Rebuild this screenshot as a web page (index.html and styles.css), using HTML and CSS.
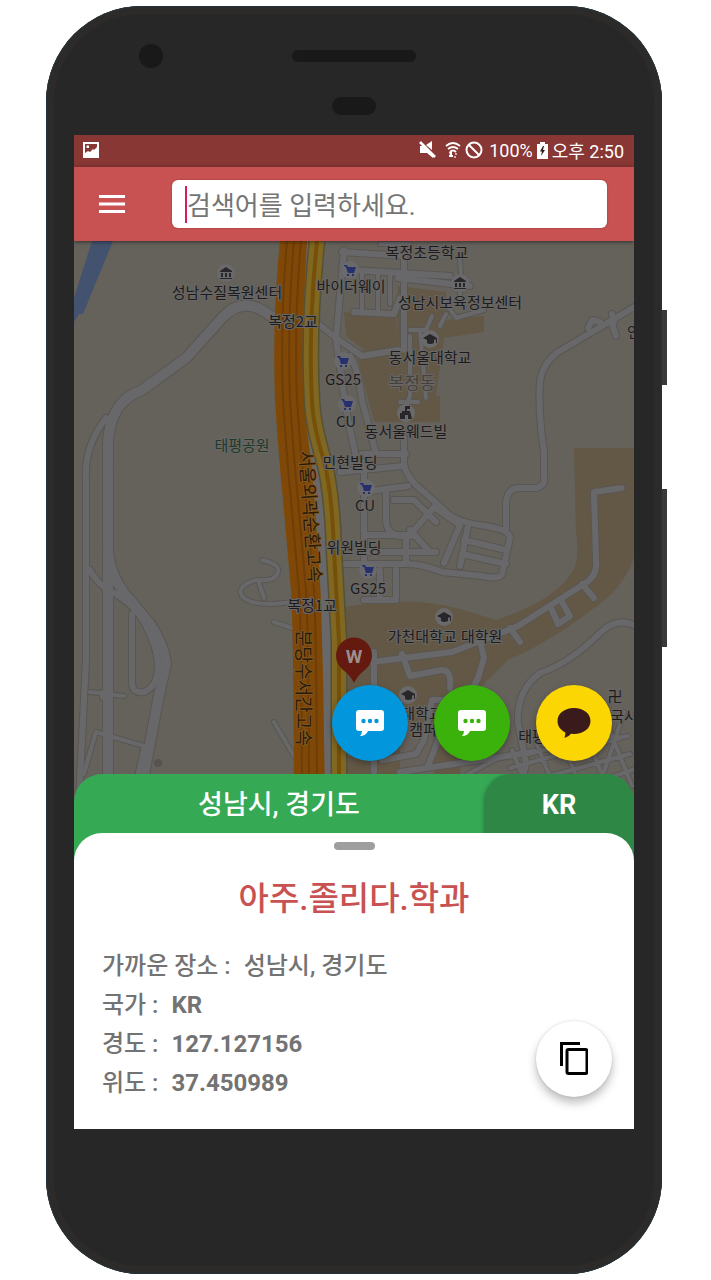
FILE: index.html
```html
<!DOCTYPE html>
<html lang="ko">
<head>
<meta charset="utf-8">
<meta name="viewport" content="width=device-width, initial-scale=1">
<title>성남시, 경기도</title>
<link rel="stylesheet" href="styles.css">
</head>
<body>
<div class="phone">
  <span class="side-key side-key-power"></span>
  <span class="side-key side-key-volume"></span>
  <div class="bezel">
    <div class="bezel-row">
      <span class="camera"></span>
      <span class="speaker"></span>
    </div>
    <span class="sensor"></span>
  </div>

  <main class="screen">
    <div class="status-bar">
      <svg class="status-photo" width="16" height="16" viewBox="0 0 16 16"><path fill="#fff" fill-rule="evenodd" d="M0 0h16v16H0zM2 2v9l3-2 2 1 3-3 1 1 3-3V2zM3.500 3.500h2.500v2.500H3.500z"/></svg>
      <div class="status-info">
        <svg width="18" height="18" viewBox="0 0 18 18"><path fill="#fff" d="M1 5h3l10 9v3l-6-5H1zM7 4l6-4v9z"/><path stroke="#fff" stroke-width="2.600" d="M1 1l15 15"/></svg>
        <svg class="status-wifi" width="16" height="18" viewBox="0 0 16 18"><g fill="none" stroke="#fff" stroke-width="1.800"><path d="M1 5q7-6 14 0M3 8q5-4 10 0M5 11q3-3 6 0"/></g><path fill="#fff" d="M4 11h3v3h1v2H4v-2h1z"/><path fill="#d9a9a6" d="M10 12h2v2h-2zM9 15h2v2H9z"/></svg>
        <svg width="18" height="18" viewBox="0 0 18 18"><g fill="none" stroke="#fff" stroke-width="2"><circle cx="9" cy="9" r="7.500"/><path d="M4 4l10 10"/></g></svg>
        <span class="battery-text">100%</span>
        <svg width="11" height="17" viewBox="0 0 11 17"><path fill="#fff" d="M3 0h5v2h3v15H0V2h3z"/><path fill="#2a1c1c" d="M6 4L3 9.500h2L4 14l4-6H6l1-4z"/></svg>
        <span>오후 2:50</span>
      </div>
    </div>

    <header class="toolbar">
      <button class="menu-button" type="button" aria-label="메뉴">
        <svg width="26" height="20" viewBox="0 0 26 20"><path stroke="#fff" stroke-width="2.800" d="M0 2.500h26M0 10h26M0 17.500h26"/></svg>
      </button>
      <label class="search">
        <span class="caret"></span>
        <input class="search-input" type="text" aria-label="검색어" placeholder="검색어를 입력하세요.">
      </label>
    </header>

    <section class="map">
      <svg class="map-canvas" viewBox="74 241 560 616" role="img" aria-label="지도">
        <defs>
          <g id="road-wide">
            <path d="M108 860V440q2-20 10-32q8-12 24-18L186 358L222 318Q240 298 262 310L280 322"/>
            <path d="M108 470v80q2 28 22 50l20 24q14 20 16 40l-8 36-28 150"/>
          </g>
          <g id="road-mid">
            <path d="M106 418Q84 446 86 480V660L76 860M90 570q6 12 18 20q26 12 38 36q12 24 12 40q0 20-14 26q-12 2-12-10V614"/>
            <path d="M316 322l20 16 26 18 36-6"/>
            <path d="M344 250L336 340L346 410L358 466"/>
            <path d="M350 356q8 12 12 44l14 54"/>
            <path d="M342 252L404 256V350M352 270L450 276M398 278L470 286"/>
            <path d="M354 312l40 2 6-16"/>
            <path d="M404 438v26q2 14 20 28l22 20q10 10 40 14q24 4 24 12l-8 36q-2 6-20 2l-40-4q-20-8-34-8H340"/>
            <path d="M340 472l64-6M362 454h44M364 462v110M364 492l44-6M386 490l0 32q2 14 16 14h14"/>
            <path d="M364 535h46l24-28 26 18-16 38M364 552h72M410 530l20 22M394 500h20l22 22M406 538v26"/>
            <path d="M468 526l-8 40M464 540l42 10M462 554l44 10"/>
            <path d="M364 600h32v-30M380 570v30"/>
            <path d="M506 532v-30q2-14 12-14h18q10-2 8-12v-24q-6-40-4-70q2-18 18-30l78-46"/>
            <path d="M588 328l4-8 8 2M612 324l4 12M614 322l-2-8"/>
            <path d="M594 494v-2l28-4M594 494l2 66q2 16-12 24l-66 42-66 26-80 10"/>
            <path d="M582 584l12 14M552 610l6 14 12-8-8-14M510 628l10 14"/>
            <path d="M634 625q-18-8-34 8-30 30-60 40-24 18-22 50l8 40-18 90"/>
            <path d="M480 640l4 18-6 20-12 22h-34q-6 30-8 40l-8 14-34 6M402 654l8 22 32-6q10 0 8 18"/>
            <path d="M374 652v120M400 772l134-20M438 740l-10 26"/>
          </g>
          <g id="road-thin">
            <path d="M262 560q18 4 16 12-2 10-22 8-20 6-14 16 10 12 50 6M258 580l6 18M274 622l18 6M274 722l20 34"/>
            <path d="M90 692l34 4M102 692v6M84 774l12-42 48 14-16 70M96 732l-12 40"/>
            <path d="M362 270v40M378 272v38M390 272v32M380 244h30M460 260l2 26M460 286v16M410 330h16l6-14M444 300l12 18 28-8M440 326l6-12M410 336v60l-4 10M420 330l6 68M400 402h18"/>
            <path d="M468 774l30-16 130-22M512 750l24 60M536 742l24 60M560 736l24 60M584 730l24 60M608 726l24 60M510 768l110-30M520 784l110-30M548 798l90-30M624 712l-20 60"/>
          </g>
          <g id="poi-shop"><circle r="9" fill="#6a696b"/><path fill="#26306e" d="M-6-5h3l1 2h8l-2 6h-6l-2-6-2-1zM-3 4h2v2h-2zM2 4h2v2H2z"/></g>
          <g id="poi-museum"><circle r="9" fill="#6a696b"/><path fill="#29262a" d="M-6-2l6-4 6 4v1H-6zM-5 0h2v4h-2zM-1 0h2v4h-2zM3 0h2v4H3zM-6 5H6v1H-6z"/></g>
          <g id="poi-school"><circle r="9" fill="#6a696b"/><path fill="#29262a" d="M-7-1l7-4 7 4v5H6V0L4 1v3q-4 2-7 0V1z"/></g>
        </defs>

        <rect x="74" y="241" width="560" height="616" fill="#65615b"/>
        <path fill="#43536f" d="M92 241h21L83 314h-4l-5 8v-24z"/>
        <g fill="#635846">
          <path d="M344 312l40 4 12-4v34l-32 4-18-14zM398 286l48 6v28l38-4v16l-40 6-8 58h4v26h-66l-18-70 40-8z"/>
          <path d="M574 448h60v110q-12 32-40 50-44 34-86 52l-40 40-8 74H340V608q70-14 124 2l32 10q60-20 76-48q8-10 4-40z"/>
          <path fill="#66615a" d="M400 722h34v52h-34z"/>
        </g>
        <g class="road-casing"><use class="w-wide" href="#road-wide"/><use class="w-mid" href="#road-mid"/><use class="w-thin" href="#road-thin"/></g>
        <g class="road-fill"><use class="w-wide" href="#road-wide"/><use class="w-mid" href="#road-mid"/><use class="w-thin" href="#road-thin"/></g>

        <path fill="#68686a" d="M300 241h12l-6 120 14 120 16 120v256h-16l-8-256-10-160z"/>
        <path fill="#804806" d="M280 241q-8 80-5 159 4 60 8 100l8 90q3 50 3 267h31q0-130-4-257-3-60-10-140-8-50-8-140l4-79z"/>
        <g fill="none" stroke-linejoin="round">
          <path stroke="#6e3d08" stroke-width="2" d="M287 241q-7 80-4 159 4 60 8 100l8 90q3 50 3 267M294 241q-7 80-4 159 4 60 8 100l8 90q3 50 3 267M301 241q-7 80-4 159 4 60 9 100l8 90q3 50 3 267"/>
          <path stroke="#555038" stroke-width="17" d="M317 241q-9 90-5 160 1 24 12 60 8 30 10 90l5 90v216"/>
          <path stroke="#806722" stroke-width="14" d="M317 241q-9 90-5 160 1 24 12 60 8 30 10 90l5 90v216"/>
          <path stroke="#755009" stroke-width="4" d="M317 241q-9 90-5 160 1 24 12 60 8 30 10 90l5 90v216"/>
        </g>

        <use href="#poi-museum" x="226" y="273"/>
        <use href="#poi-shop" x="350" y="270"/>
        <use href="#poi-museum" x="460" y="283"/>
        <use href="#poi-school" x="430" y="339"/>
        <use href="#poi-shop" x="343" y="361"/>
        <use href="#poi-shop" x="347" y="404"/>
        <circle cx="406" cy="413" r="9" fill="#6a696b"/>
        <path fill="#29262a" d="M405 406h5v3h-3v2h3l2 8h-12v-6h2v-2h3z"/>
        <path fill="#6a696b" d="M405 415h3v4h-3z"/>
        <use href="#poi-shop" x="366" y="488"/>
        <use href="#poi-shop" x="368" y="570"/>
        <use href="#poi-school" x="444" y="617"/>
        <use href="#poi-school" x="408" y="695"/>
        <circle cx="158" cy="763" r="4" fill="#55524f"/>

        <g class="map-label">
          <text x="227" y="298">성남수질복원센터</text>
          <text x="427" y="258">복정초등학교</text>
          <text x="351" y="292">바이더웨이</text>
          <text x="460" y="308">성남시보육정보센터</text>
          <text x="293" y="327">복정2교</text>
          <text x="430" y="363">동서울대학교</text>
          <text x="343" y="385">GS25</text>
          <text x="346" y="427">CU</text>
          <text x="406" y="437">동서울웨드빌</text>
          <text x="350" y="468">민현빌딩</text>
          <text x="365" y="511">CU</text>
          <text x="354" y="553">위원빌딩</text>
          <text x="368" y="594">GS25</text>
          <text x="312" y="611">복정1교</text>
          <text x="445" y="642">가천대학교 대학원</text>
          <text x="422" y="719">대학교</text>
          <text x="423" y="735">캠퍼</text>
          <text x="532" y="742">태평</text>
          <text x="615" y="702">卍</text>
          <text x="624" y="722">국사</text>
          <text x="634" y="338">인</text>
          <text class="label-park" x="242" y="451">태평공원</text>
          <text class="label-district" x="412" y="389">복정동</text>
          <text class="label-road" transform="translate(304 517) rotate(86)">서울외곽순환고속</text>
          <text class="label-road" transform="translate(297 688) rotate(90)">분당수서간고속</text>
        </g>

        <path fill="#651a10" d="M354 683q-4-8-12-14a18 18 0 1 1 24 0q-8 6-12 14z"/>
        <text class="pin-letter" x="354" y="663">W</text>
      </svg>

      <div class="share-actions">
        <button class="fab fab-blue" type="button" aria-label="메시지 공유">
          <svg width="30" height="28" viewBox="0 0 30 28"><path fill="#fff" d="M4 1h22q3 0 3 3v15q0 3-3 3H13q-2 5-8 5q2-2 2-5H4q-3 0-3-3V4q0-3 3-3z"/><g fill="#0296dc"><circle cx="8.500" cy="12" r="2.200"/><circle cx="15" cy="12" r="2.200"/><circle cx="21.500" cy="12" r="2.200"/></g></svg>
        </button>
        <button class="fab fab-green" type="button" aria-label="네이버 공유">
          <svg width="30" height="28" viewBox="0 0 30 28"><path fill="#fff" d="M4 1h22q3 0 3 3v15q0 3-3 3H13q-2 5-8 5q2-2 2-5H4q-3 0-3-3V4q0-3 3-3z"/><g fill="#3bb20c"><circle cx="8.500" cy="12" r="2.200"/><circle cx="15" cy="12" r="2.200"/><circle cx="21.500" cy="12" r="2.200"/></g></svg>
        </button>
        <button class="fab fab-yellow" type="button" aria-label="카카오톡 공유">
          <svg width="34" height="30" viewBox="0 0 34 30"><path fill="#3b1a1c" d="M17 0c9.500 0 16.500 5.500 16.500 13S26.500 26 17 26l-3-.2q-2 3-6.500 4.200q1-3 .8-5.500C3.500 22 .5 18 .5 13C.5 5.500 7.500 0 17 0z"/></svg>
        </button>
      </div>
    </section>

    <section class="sheet">
      <div class="place-bar">
        <div class="place-name">성남시, 경기도</div>
        <div class="place-country">KR</div>
      </div>
      <div class="card">
        <span class="handle"></span>
        <h1 class="title">아주.졸리다.학과</h1>
        <div class="card-body">
          <dl class="details">
            <div class="detail"><dt>가까운 장소 :</dt><dd>성남시, 경기도</dd></div>
            <div class="detail"><dt>국가 :</dt><dd class="latin">KR</dd></div>
            <div class="detail"><dt>경도 :</dt><dd class="latin">127.127156</dd></div>
            <div class="detail"><dt>위도 :</dt><dd class="latin">37.450989</dd></div>
          </dl>
          <button class="fab fab-copy" type="button" aria-label="복사">
            <svg width="28" height="34" viewBox="0 0 28 34"><path fill="none" stroke="#000" stroke-width="3" d="M1.500 24V1.500H20"/><rect x="7" y="7.500" width="20" height="24" rx="1.500" fill="none" stroke="#000" stroke-width="3"/></svg>
          </button>
        </div>
      </div>
    </section>
  </main>
</div>
</body>
</html>
```
FILE: styles.css
```css
* {
  box-sizing: border-box;
}

body {
  margin: 0;
  background: #fff;
  font-family: Roboto, "Noto Sans CJK KR", sans-serif;
}

button {
  padding: 0;
  border: 0;
  background: none;
}

svg {
  display: block;
  flex: none;
}

.phone {
  position: relative;
  margin: 6px 49px 6px 46px;
  padding: 0 28px 145px;
  border-radius: 96px;
  background: #272727;
  box-shadow: inset 0 0 0 1px #25343a, inset 0 0 0 8px #2d2b2a;
}

.side-key {
  position: absolute;
  left: 100%;
  width: 5px;
  background: #39393b;
}

.side-key-power {
  top: 304px;
  height: 75px;
}

.side-key-volume {
  top: 483px;
  height: 158px;
}

.bezel {
  display: flex;
  flex-direction: column;
  align-items: center;
  gap: 29px;
  height: 129px;
  padding-top: 38px;
}

.bezel-row {
  display: grid;
  grid-template-columns: 1fr 124px 1fr;
  align-items: center;
  width: 100%;
}

.camera {
  width: 24px;
  height: 24px;
  margin-left: 65px;
  border-radius: 50%;
  background: #191919;
}

.speaker {
  height: 12px;
  border-radius: 6px;
  background: #191919;
}

.sensor {
  width: 44px;
  height: 18px;
  border-radius: 9px;
  background: #191919;
}

.screen {
  overflow: hidden;
}

.status-bar {
  display: flex;
  align-items: center;
  justify-content: space-between;
  height: 32px;
  padding: 0 10px 2px 9px;
  background: #883734;
  color: #fff;
  font-size: 18px;
}

.status-info {
  display: flex;
  align-items: center;
  gap: 4px;
}

.status-wifi {
  margin-left: 4px;
}

.battery-text {
  margin-left: 2px;
}

.toolbar {
  position: relative;
  z-index: 1;
  display: flex;
  align-items: center;
  gap: 47px;
  height: 74px;
  padding: 0 27px 0 25px;
  background: #c85251;
  box-shadow: 0 1px 4px rgba(0, 0, 0, 0.5);
}

.search {
  display: flex;
  flex: 1;
  align-items: center;
  height: 48px;
  padding: 0 14px 0 13px;
  border-radius: 6px;
  background: #fff;
  box-shadow: 0 0 2px #8b3a38;
}

.caret {
  width: 2px;
  height: 37px;
  background: #d81b60;
}

.search-input {
  flex: 1;
  min-width: 0;
  padding: 3px 0 0;
  border: 0;
  outline: 0;
  background: none;
  font: 26px Roboto, "Noto Sans CJK KR", sans-serif;
}

.search-input::placeholder {
  color: #757575;
}

.map {
  position: relative;
}

.map-canvas {
  width: 100%;
}

.road-casing,
.road-fill {
  fill: none;
  stroke-linecap: round;
  stroke-linejoin: round;
}

.road-casing {
  stroke: #595652;
}

.road-fill {
  stroke: #68686a;
}

.road-casing .w-wide { stroke-width: 12px; }
.road-casing .w-mid { stroke-width: 8px; }
.road-casing .w-thin { stroke-width: 6px; }
.road-fill .w-wide { stroke-width: 10px; }
.road-fill .w-mid { stroke-width: 6px; }
.road-fill .w-thin { stroke-width: 4px; }

.map-label {
  fill: #1d1b1c;
  stroke: #696765;
  stroke-width: 2px;
  paint-order: stroke;
  font-family: "Noto Sans CJK KR", sans-serif;
  font-size: 15px;
  text-anchor: middle;
}

.map-label .label-park {
  fill: #1e3a28;
}

.map-label .label-district {
  fill: #45413a;
  font-size: 17px;
}

.map-label .label-road {
  fill: #2b1a08;
  stroke: #81571e;
  font-size: 18px;
}

.pin-letter {
  fill: #9a8f8c;
  font-size: 19px;
  font-weight: 700;
  text-anchor: middle;
}

.share-actions {
  position: absolute;
  right: 22px;
  bottom: 96px;
  display: flex;
  gap: 26px;
}

.fab {
  display: flex;
  flex: none;
  align-items: center;
  justify-content: center;
  width: 76px;
  height: 76px;
  border-radius: 50%;
  box-shadow: 0 3px 6px rgba(0, 0, 0, 0.3);
}

.fab-blue { background: #0296dc; }
.fab-green { background: #3bb20c; }
.fab-yellow { background: #fbd602; }

.fab-copy {
  align-self: flex-end;
  margin-bottom: 6px;
  background: #fff;
  box-shadow: 0 6px 10px rgba(0, 0, 0, 0.25), 0 0 3px rgba(0, 0, 0, 0.12);
}

.sheet {
  position: relative;
  margin-top: -83px;
}

.place-bar {
  display: flex;
  overflow: hidden;
  border-radius: 28px 28px 0 0;
  background: #36a955;
  color: #fff;
  font-size: 27px;
  font-weight: 500;
  line-height: 55px;
  text-align: center;
}

.place-name {
  flex: 1;
  padding: 4px 0 28px;
}

.place-country {
  width: 150px;
  padding-top: 4px;
  border-radius: 28px 28px 0 0;
  background: #2f8746;
  box-shadow: 0 0 4px rgba(0, 0, 0, 0.3);
  font-weight: 700;
}

.card {
  position: relative;
  display: flex;
  flex-direction: column;
  margin-top: -28px;
  padding: 9px 0 26px;
  border-radius: 28px 28px 0 0;
  background: #fff;
}

.handle {
  align-self: center;
  width: 41px;
  height: 8px;
  border-radius: 4px;
  background: #9e9e9e;
}

.title {
  margin: 27px 0 26px;
  color: #c85251;
  font-size: 33px;
  font-weight: 500;
  line-height: 44px;
  text-align: center;
}

.card-body {
  display: flex;
  padding: 0 22px 0 28px;
}

.details {
  flex: 1;
  margin: 0;
  color: #737373;
  font-size: 24px;
  font-weight: 500;
  line-height: 39px;
}

.detail {
  display: flex;
  gap: 13px;
}

.detail dd {
  margin: 0;
}

.detail .latin {
  font-weight: 700;
}
```
